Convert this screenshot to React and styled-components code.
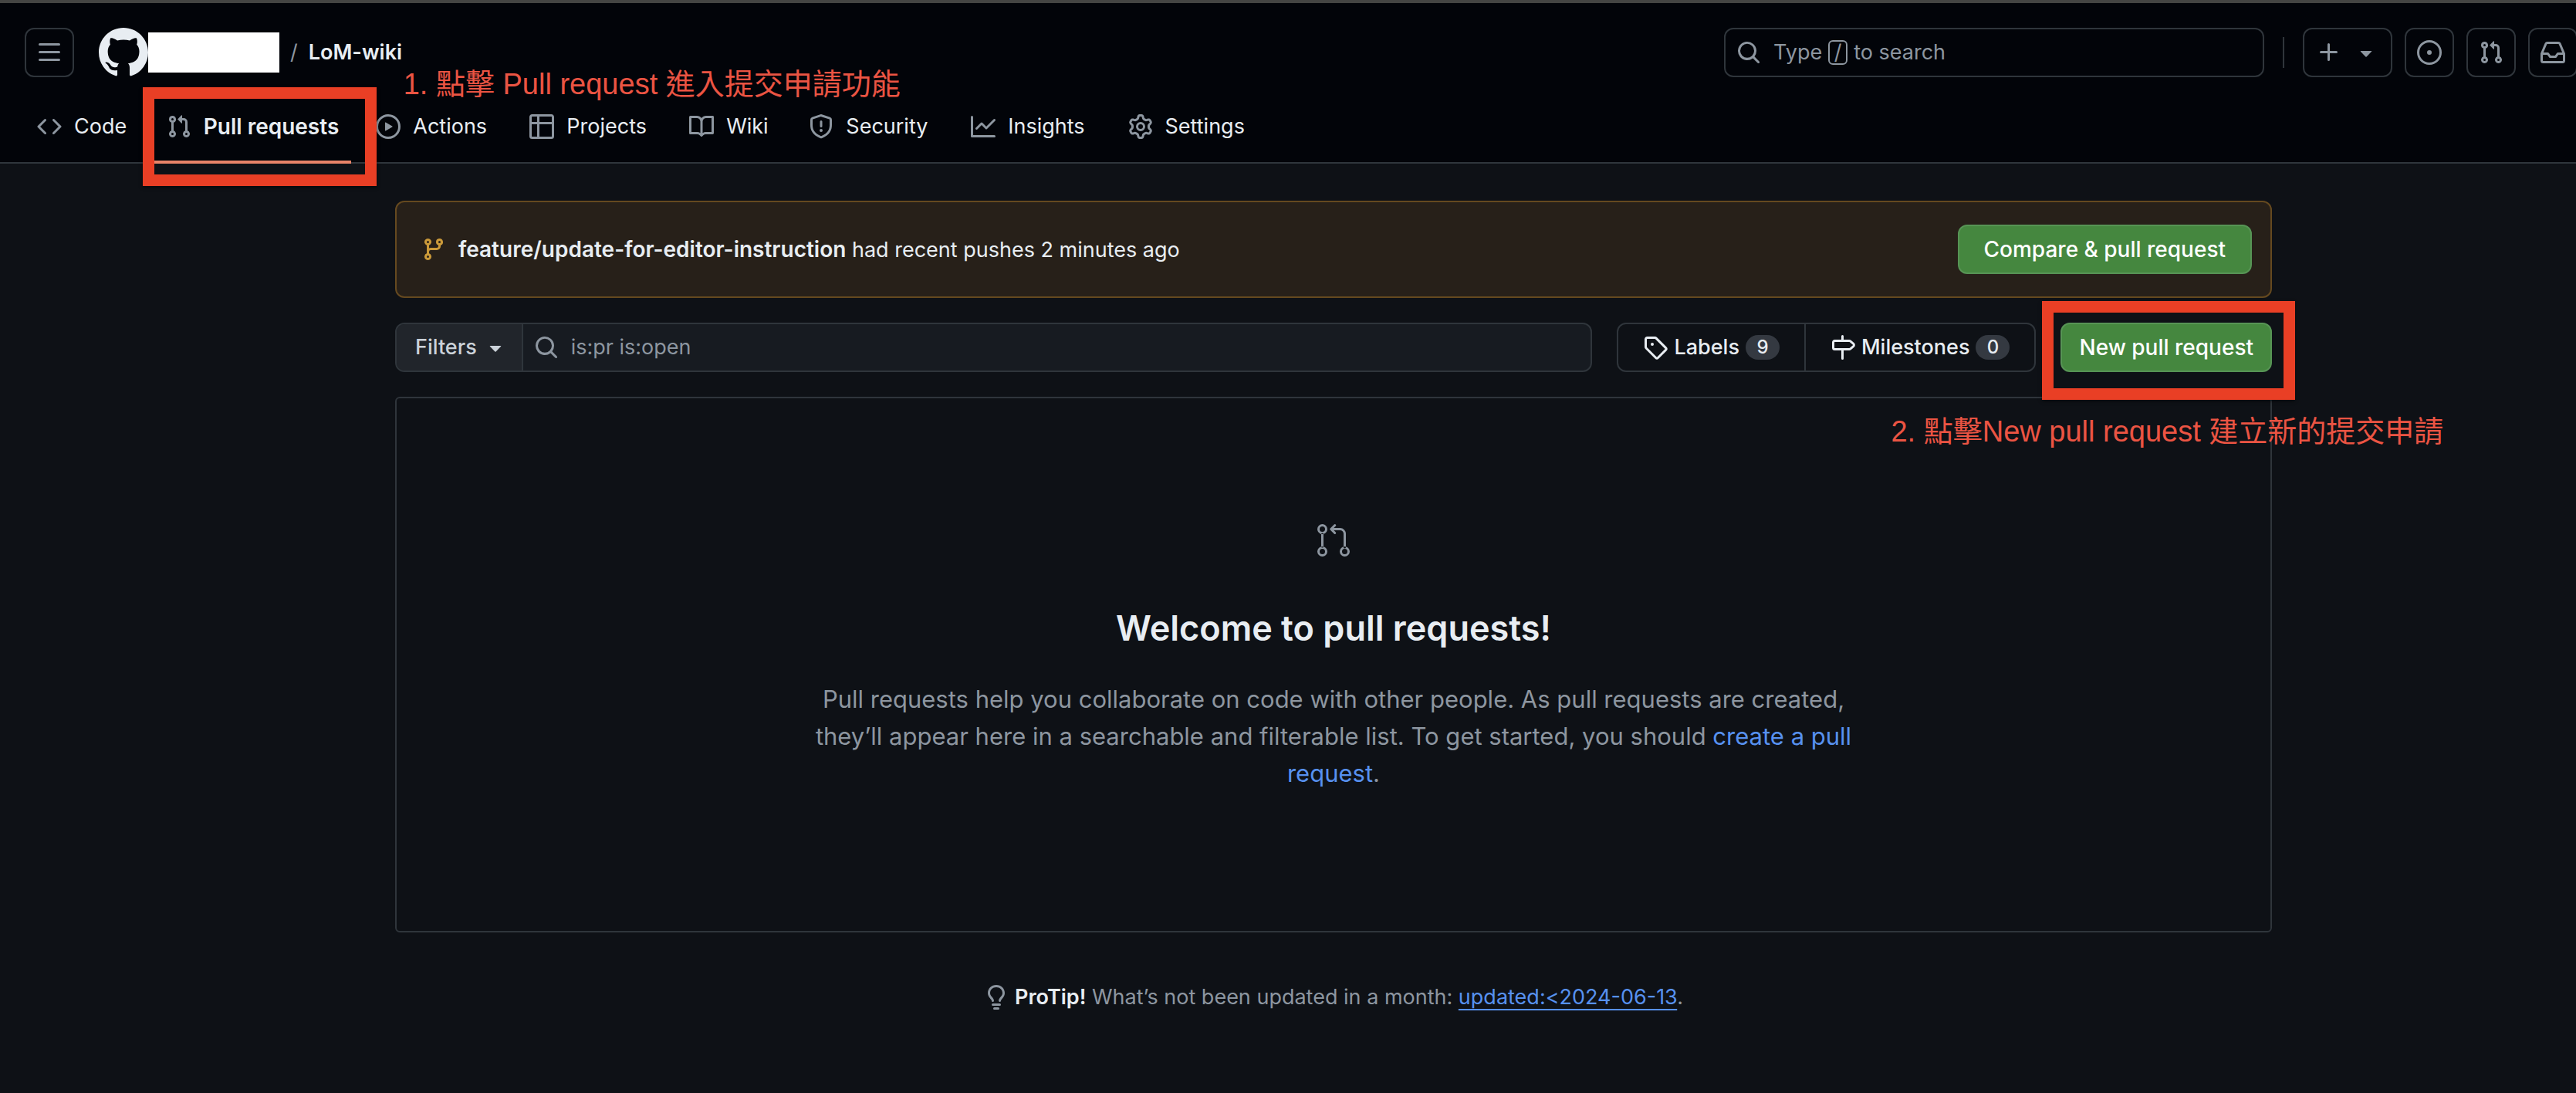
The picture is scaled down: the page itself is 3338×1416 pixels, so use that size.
import React from "react";
import styled, { createGlobalStyle, css } from "styled-components";

const color = {
  canvas: "#0e1116",
  header: "#020409",
  border: "#2f353b",
  text: "#e8edf2",
  muted: "#8d96a0",
  link: "#5791f0",
  green: "#45873f",
  mark: "#e93f25",
  note: "#eb5443",
};

const GlobalStyle = createGlobalStyle`
  *, *::before, *::after { box-sizing: border-box; }
  html { background: ${color.canvas}; }
  body {
    margin: 0;
    color: ${color.text};
    font-family: Inter, "Noto Sans CJK TC", sans-serif;
    font-size: 27px;
    line-height: 40px;
    overflow-x: hidden;
  }
  button, input { font: inherit; color: inherit; }
  a { color: inherit; text-decoration: none; }
`;

const paths = {
  mark: "M8 0c4.42 0 8 3.58 8 8a8.013 8.013 0 0 1-5.45 7.59c-.4.08-.55-.17-.55-.38 0-.27.01-1.13.01-2.2 0-.75-.25-1.23-.54-1.48 1.78-.2 3.65-.88 3.65-3.95 0-.88-.31-1.59-.82-2.15.08-.2.36-1.02-.08-2.12 0 0-.67-.22-2.2.82-.64-.18-1.32-.27-2-.27-.68 0-1.36.09-2 .27-1.53-1.03-2.2-.82-2.2-.82-.44 1.1-.16 1.92-.08 2.12-.51.56-.82 1.28-.82 2.15 0 3.06 1.86 3.75 3.64 3.95-.23.2-.44.55-.51 1.07-.46.21-1.61.55-2.33-.66-.15-.24-.6-.83-1.23-.82-.67.01-.27.38.01.53.34.19.73.9.82 1.13.16.45.68 1.31 2.69.94 0 .67.01 1.3.01 1.49 0 .21-.15.45-.55.38A7.995 7.995 0 0 1 0 8c0-4.42 3.58-8 8-8Z",
  code: "m11.28 3.22 4.25 4.25a.75.75 0 0 1 0 1.06l-4.25 4.25a.749.749 0 0 1-1.275-.326.749.749 0 0 1 .215-.734L13.94 8l-3.72-3.72a.749.749 0 0 1 .326-1.275.749.749 0 0 1 .734.215Zm-6.56 0a.751.751 0 0 1 1.042.018.751.751 0 0 1 .018 1.042L2.06 8l3.72 3.72a.749.749 0 0 1-.326 1.275.749.749 0 0 1-.734-.215L.47 8.53a.75.75 0 0 1 0-1.06Z",
  pull: "M1.5 3.25a2.25 2.25 0 1 1 3 2.122v5.256a2.251 2.251 0 1 1-1.5 0V5.372A2.25 2.25 0 0 1 1.5 3.25Zm5.677-.177L9.573.677A.25.25 0 0 1 10 .854V2.5h1A2.5 2.5 0 0 1 13.5 5v5.628a2.251 2.251 0 1 1-1.5 0V5a1 1 0 0 0-1-1h-1v1.646a.25.25 0 0 1-.427.177L7.177 3.427a.25.25 0 0 1 0-.354ZM3.75 2.5a.75.75 0 1 0 0 1.5.75.75 0 0 0 0-1.5Zm0 9.5a.75.75 0 1 0 0 1.5.75.75 0 0 0 0-1.5Zm8.25.75a.75.75 0 1 0 1.5 0 .75.75 0 0 0-1.5 0Z",
  play: "M8 0a8 8 0 1 1 0 16A8 8 0 0 1 8 0ZM1.5 8a6.5 6.5 0 1 0 13 0 6.5 6.5 0 0 0-13 0Zm4.879-2.773 4.264 2.559a.25.25 0 0 1 0 .428l-4.264 2.559A.25.25 0 0 1 6 10.559V5.442a.25.25 0 0 1 .379-.215Z",
  table: "M0 1.75C0 .784.784 0 1.75 0h12.5C15.216 0 16 .784 16 1.75v12.5A1.75 1.75 0 0 1 14.25 16H1.75A1.75 1.75 0 0 1 0 14.25ZM6.5 6.5v8h7.75a.25.25 0 0 0 .25-.25V6.5Zm8-1.5V1.75a.25.25 0 0 0-.25-.25H6.5V5Zm-13 1.5v7.75c0 .138.112.25.25.25H5v-8ZM5 5V1.5H1.75a.25.25 0 0 0-.25.25V5Z",
  book: "M0 1.75A.75.75 0 0 1 .75 1h4.253c1.227 0 2.317.59 3 1.501A3.743 3.743 0 0 1 11.006 1h4.245a.75.75 0 0 1 .75.75v10.5a.75.75 0 0 1-.75.75h-4.507a2.25 2.25 0 0 0-1.591.659l-.622.621a.75.75 0 0 1-1.06 0l-.622-.621A2.25 2.25 0 0 0 5.258 13H.75a.75.75 0 0 1-.75-.75Zm7.251 10.324.004-5.073-.002-2.253A2.25 2.25 0 0 0 5.003 2.5H1.5v9h3.757a3.75 3.75 0 0 1 1.994.574ZM8.755 4.75l-.004 7.322a3.752 3.752 0 0 1 1.992-.572H14.5v-9h-3.495a2.25 2.25 0 0 0-2.25 2.25Z",
  shield: "M7.467.133a1.748 1.748 0 0 1 1.066 0l5.25 1.68A1.75 1.75 0 0 1 15 3.48V7c0 1.566-.32 3.182-1.303 4.682-.983 1.498-2.585 2.813-5.032 3.855a1.697 1.697 0 0 1-1.33 0c-2.447-1.042-4.049-2.357-5.032-3.855C1.32 10.182 1 8.566 1 7V3.48a1.75 1.75 0 0 1 1.217-1.667Zm.61 1.429a.25.25 0 0 0-.153 0l-5.25 1.68a.25.25 0 0 0-.174.238V7c0 1.358.275 2.666 1.057 3.86.784 1.194 2.121 2.34 4.366 3.297a.196.196 0 0 0 .154 0c2.245-.956 3.582-2.104 4.366-3.298C13.225 9.666 13.5 8.36 13.5 7V3.48a.251.251 0 0 0-.174-.237l-5.25-1.68ZM8.75 4.75v3a.75.75 0 0 1-1.5 0v-3a.75.75 0 0 1 1.5 0ZM9 10.5a1 1 0 1 1-2 0 1 1 0 0 1 2 0Z",
  graph: "M1.5 1.75V13.5h13.75a.75.75 0 0 1 0 1.5H.75a.75.75 0 0 1-.75-.75V1.75a.75.75 0 0 1 1.5 0Zm14.28 2.53-5.25 5.25a.75.75 0 0 1-1.06 0L7 7.06 4.28 9.78a.751.751 0 0 1-1.042-.018.751.751 0 0 1-.018-1.042l3.25-3.25a.75.75 0 0 1 1.06 0L10 7.94l4.72-4.72a.751.751 0 0 1 1.042.018.751.751 0 0 1 .018 1.042Z",
  gear: "M8 0a8.2 8.2 0 0 1 .701.031C9.444.095 9.99.645 10.16 1.29l.288 1.107c.018.066.079.158.212.224.231.114.454.243.668.386.123.082.233.09.299.071l1.103-.303c.644-.176 1.392.021 1.82.63.27.385.506.792.704 1.218.315.675.111 1.422-.364 1.891l-.814.806c-.049.048-.098.147-.088.294.016.257.016.515 0 .772-.01.147.038.246.088.294l.814.806c.475.469.679 1.216.364 1.891a7.977 7.977 0 0 1-.704 1.217c-.428.61-1.176.807-1.82.63l-1.102-.302c-.067-.019-.177-.011-.3.071a5.909 5.909 0 0 1-.668.386c-.133.066-.194.158-.211.224l-.29 1.106c-.168.646-.715 1.196-1.458 1.26a8.006 8.006 0 0 1-1.402 0c-.743-.064-1.289-.614-1.458-1.26l-.289-1.106c-.018-.066-.079-.158-.212-.224a5.738 5.738 0 0 1-.668-.386c-.123-.082-.233-.09-.299-.071l-1.103.303c-.644.176-1.392-.021-1.82-.63a8.12 8.12 0 0 1-.704-1.218c-.315-.675-.111-1.422.363-1.891l.815-.806c.05-.048.098-.147.088-.294a6.214 6.214 0 0 1 0-.772c.01-.147-.038-.246-.088-.294l-.815-.806C.635 6.045.431 5.298.746 4.623a7.92 7.92 0 0 1 .704-1.217c.428-.61 1.176-.807 1.82-.63l1.102.302c.067.019.177.011.3-.071.214-.143.437-.272.668-.386.133-.066.194-.158.211-.224l.29-1.106C6.009.645 6.556.095 7.299.03 7.53.01 7.764 0 8 0Zm-.571 1.525c-.036.003-.108.036-.137.146l-.289 1.105c-.147.561-.549.967-.998 1.189-.173.086-.34.183-.5.29-.417.278-.97.423-1.529.27l-1.103-.303c-.109-.03-.175.016-.195.045-.22.312-.412.644-.573.99-.014.031-.021.11.059.19l.815.806c.411.406.562.957.53 1.456a4.709 4.709 0 0 0 0 .582c.032.499-.119 1.05-.53 1.456l-.815.806c-.081.08-.073.159-.059.19.162.346.353.677.573.989.02.03.085.076.195.046l1.102-.303c.56-.153 1.113-.008 1.53.27.161.107.328.204.501.29.447.222.85.629.997 1.189l.289 1.105c.029.109.101.143.137.146a6.6 6.6 0 0 0 1.142 0c.036-.003.108-.036.137-.146l.289-1.105c.147-.561.549-.967.998-1.189.173-.086.34-.183.5-.29.417-.278.97-.423 1.529-.27l1.103.303c.109.029.175-.016.195-.045.22-.313.411-.644.573-.99.014-.031.021-.11-.059-.19l-.815-.806c-.411-.406-.562-.957-.53-1.456a4.709 4.709 0 0 0 0-.582c-.032-.499.119-1.05.53-1.456l.815-.806c.081-.08.073-.159.059-.19a6.464 6.464 0 0 0-.573-.989c-.02-.03-.085-.076-.195-.046l-1.102.303c-.56.153-1.113.008-1.53-.27a4.44 4.44 0 0 0-.501-.29c-.447-.222-.85-.629-.997-1.189l-.289-1.105c-.029-.11-.101-.143-.137-.146a6.6 6.6 0 0 0-1.142 0ZM11 8a3 3 0 1 1-6 0 3 3 0 0 1 6 0ZM9.5 8a1.5 1.5 0 1 0-3.001.001A1.5 1.5 0 0 0 9.5 8Z",
  search: "M10.68 11.74a6 6 0 0 1-7.922-8.982 6 6 0 0 1 8.982 7.922l3.04 3.04a.749.749 0 0 1-.326 1.275.749.749 0 0 1-.734-.215ZM11.5 7a4.499 4.499 0 1 0-8.997 0A4.499 4.499 0 0 0 11.5 7Z",
  bars: "M1 2.75A.75.75 0 0 1 1.75 2h12.5a.75.75 0 0 1 0 1.5H1.75A.75.75 0 0 1 1 2.75Zm0 5A.75.75 0 0 1 1.75 7h12.5a.75.75 0 0 1 0 1.5H1.75A.75.75 0 0 1 1 7.75ZM1.75 12h12.5a.75.75 0 0 1 0 1.5H1.75a.75.75 0 0 1 0-1.5Z",
  plus: "M7.75 2a.75.75 0 0 1 .75.75V7h4.25a.75.75 0 0 1 0 1.5H8.5v4.25a.75.75 0 0 1-1.5 0V8.5H2.75a.75.75 0 0 1 0-1.5H7V2.75A.75.75 0 0 1 7.75 2Z",
  caret: "m4.427 7.427 3.396 3.396a.25.25 0 0 0 .354 0l3.396-3.396A.25.25 0 0 0 11.396 7H4.604a.25.25 0 0 0-.177.427Z",
  issue: "M8 9.5a1.5 1.5 0 1 0 0-3 1.5 1.5 0 0 0 0 3ZM8 0a8 8 0 1 1 0 16A8 8 0 0 1 8 0ZM1.5 8a6.5 6.5 0 1 0 13 0 6.5 6.5 0 0 0-13 0Z",
  inbox: "M2.8 2.06A1.75 1.75 0 0 1 4.41 1h7.18c.7 0 1.333.417 1.61 1.06l2.74 6.395c.04.093.06.194.06.295v4.5A1.75 1.75 0 0 1 14.25 15H1.75A1.75 1.75 0 0 1 0 13.25v-4.5c0-.101.02-.202.06-.295Zm1.61.44a.25.25 0 0 0-.23.152L1.887 8H4.75a.75.75 0 0 1 .6.3L6.625 10h2.75l1.275-1.7a.75.75 0 0 1 .6-.3h2.863L11.82 2.652a.25.25 0 0 0-.23-.152Zm10.09 7h-2.875l-1.275 1.7a.75.75 0 0 1-.6.3h-3.5a.75.75 0 0 1-.6-.3L4.375 9.5H1.5v3.75c0 .138.112.25.25.25h12.5a.25.25 0 0 0 .25-.25Z",
  branch: "M9.5 3.25a2.25 2.25 0 1 1 3 2.122V6A2.5 2.5 0 0 1 10 8.5H6a1 1 0 0 0-1 1v1.128a2.251 2.251 0 1 1-1.5 0V5.372a2.25 2.25 0 1 1 1.5 0v1.836A2.493 2.493 0 0 1 6 7h4a1 1 0 0 0 1-1v-.628A2.25 2.25 0 0 1 9.5 3.25Zm-6 0a.75.75 0 1 0 1.5 0 .75.75 0 0 0-1.5 0Zm8.25-.75a.75.75 0 1 0 0 1.5.75.75 0 0 0 0-1.5ZM4.25 12a.75.75 0 1 0 0 1.5.75.75 0 0 0 0-1.5Z",
  tag: "M1 7.775V2.75C1 1.784 1.784 1 2.75 1h5.025c.464 0 .91.184 1.238.513l6.25 6.25a1.75 1.75 0 0 1 0 2.474l-5.026 5.026a1.75 1.75 0 0 1-2.474 0l-6.25-6.25A1.752 1.752 0 0 1 1 7.775Zm1.5 0c0 .066.026.13.073.177l6.25 6.25a.25.25 0 0 0 .354 0l5.025-5.025a.25.25 0 0 0 0-.354l-6.25-6.25a.25.25 0 0 0-.177-.073H2.75a.25.25 0 0 0-.25.25ZM6 5a1 1 0 1 1 0 2 1 1 0 0 1 0-2Z",
  milestone: "M7.75 0a.75.75 0 0 1 .75.75V3h3.634c.414 0 .814.147 1.13.414l2.07 1.75a1.75 1.75 0 0 1 0 2.672l-2.07 1.75a1.75 1.75 0 0 1-1.13.414H8.5v5.25a.75.75 0 0 1-1.5 0V10H2.75A1.75 1.75 0 0 1 1 8.25v-3.5C1 3.784 1.784 3 2.75 3H7V.75A.75.75 0 0 1 7.75 0Zm4.384 8.5a.25.25 0 0 0 .161-.06l2.07-1.75a.248.248 0 0 0 0-.38l-2.07-1.75a.25.25 0 0 0-.161-.06H2.75a.25.25 0 0 0-.25.25v3.5c0 .138.112.25.25.25h9.384Z",
  bulb: "M8 1.5c-2.363 0-4 1.69-4 3.75 0 .984.424 1.625.984 2.304l.214.253c.223.264.47.556.673.848.284.411.537.896.621 1.49a.75.75 0 0 1-1.484.211c-.04-.282-.163-.547-.37-.847a8.456 8.456 0 0 0-.542-.68c-.084-.1-.173-.205-.268-.32C3.201 7.75 2.5 6.766 2.5 5.25 2.5 2.31 4.863 0 8 0s5.5 2.31 5.5 5.25c0 1.516-.701 2.5-1.328 3.259-.095.115-.184.22-.268.319-.207.245-.383.453-.541.681-.208.3-.33.565-.37.847a.751.751 0 0 1-1.485-.212c.084-.593.337-1.078.621-1.489.203-.292.45-.584.673-.848.075-.088.147-.173.213-.253.561-.679.985-1.32.985-2.304 0-2.06-1.637-3.75-4-3.75ZM5.75 12h4.5a.75.75 0 0 1 0 1.5h-4.5a.75.75 0 0 1 0-1.5ZM6 15.25a.75.75 0 0 1 .75-.75h2.5a.75.75 0 0 1 0 1.5h-2.5a.75.75 0 0 1-.75-.75Z",
  pullLarge: "M16 19.25a3.25 3.25 0 1 1 6.5 0 3.25 3.25 0 0 1-6.5 0Zm-14.5 0a3.25 3.25 0 1 1 6.5 0 3.25 3.25 0 0 1-6.5 0Zm0-14.5a3.25 3.25 0 1 1 6.5 0 3.25 3.25 0 0 1-6.5 0ZM4.75 3a1.75 1.75 0 1 0 .001 3.501A1.75 1.75 0 0 0 4.75 3Zm0 14.5a1.75 1.75 0 1 0 .001 3.501A1.75 1.75 0 0 0 4.75 17.5Zm14.5 0a1.75 1.75 0 1 0 .001 3.501 1.75 1.75 0 0 0-.001-3.501ZM13.405 1.72a.75.75 0 0 1 0 1.06L12.185 4h4.065A3.75 3.75 0 0 1 20 7.75v8.75a.75.75 0 0 1-1.5 0V7.75a2.25 2.25 0 0 0-2.25-2.25h-4.064l1.22 1.22a.75.75 0 0 1-1.061 1.06l-2.5-2.5a.75.75 0 0 1 0-1.06l2.5-2.5a.75.75 0 0 1 1.06 0ZM4.75 7.25A.75.75 0 0 1 5.5 8v8A.75.75 0 0 1 4 16V8a.75.75 0 0 1 .75-.75Z",
};

const Svg = styled.svg`
  display: block;
  flex: none;
  width: ${(p) => p.$size}px;
  height: ${(p) => p.$size}px;
  fill: ${(p) => p.$color};
`;

function Icon({ name, size = 32, grid = 16, tint = color.muted }) {
  return (
    <Svg viewBox={`0 0 ${grid} ${grid}`} $size={size} $color={tint} aria-hidden="true">
      <path fillRule="evenodd" d={paths[name]} />
    </Svg>
  );
}

/* Header */

const Header = styled.header`
  display: flex;
  flex-direction: column;
  gap: 16px;
  padding: 32px 0 0 32px;
  background: ${color.header};
  border-top: 4px solid #444543;
  box-shadow: inset 0 -2px ${color.border};
`;

const TopRow = styled.div`
  display: flex;
  align-items: center;
  justify-content: space-between;
`;

const Context = styled.div`
  display: flex;
  align-items: center;
`;

const Tools = styled.div`
  display: flex;
  align-items: center;
  gap: 16px;
  margin-right: -2px;
`;

const HeaderButton = styled.button`
  display: flex;
  align-items: center;
  justify-content: center;
  gap: 16px;
  width: ${(p) => (p.$wide ? 116 : 64)}px;
  height: 64px;
  padding: 0;
  background: none;
  border: 2px solid ${color.border};
  border-radius: 12px;
`;

const HomeLink = styled.a`
  display: block;
  margin-left: 32px;
`;

const OwnerMask = styled.span`
  width: 170px;
  height: 52px;
  background: #fff;
`;

const Slash = styled.span`
  padding: 0 14px;
  color: ${color.muted};
`;

const RepoLink = styled.a`
  font-weight: 600;
`;

const SearchButton = styled.button`
  display: flex;
  align-items: center;
  gap: 16px;
  width: 700px;
  height: 64px;
  padding: 0 14px;
  color: ${color.muted};
  background: none;
  border: 2px solid ${color.border};
  border-radius: 12px;
`;

const SearchLabel = styled.span`
  display: flex;
  align-items: center;
  gap: 8px;
`;

const Key = styled.kbd`
  width: 25px;
  height: 32px;
  border: 2px solid ${color.muted};
  border-radius: 6px;
  font: inherit;
  line-height: 28px;
  text-align: center;
`;

const Divider = styled.span`
  width: 2px;
  height: 40px;
  margin: 0 8px;
  background: ${color.border};
`;

const Nav = styled.nav`
  display: flex;
  gap: 16px;
`;

const NavItem = styled.div`
  position: relative;
`;

const NavLink = styled.a`
  display: flex;
  align-items: center;
  gap: 16px;
  height: 96px;
  padding: 0 16px;
  ${(p) =>
    p.$current &&
    css`
      font-size: 28px;
      font-weight: 600;
      box-shadow: inset 0 -4px #ea8468;
    `}
`;

/* Reserves the width of the bold label so tabs keep their place when selected */
const NavLabel = styled.span`
  display: grid;
  &::after {
    content: attr(data-label);
    height: 0;
    overflow: hidden;
    visibility: hidden;
    font-size: 28px;
    font-weight: 600;
  }
`;

/* Red annotations drawn over the page */

const Frame = styled.span`
  position: absolute;
  z-index: 2;
  top: ${(p) => p.$top}px;
  left: ${(p) => p.$left}px;
  width: ${(p) => p.$width}px;
  height: 128px;
  border: 15px solid ${color.mark};
  box-shadow: 0 2px 4px rgba(0, 0, 0, 0.5);
  pointer-events: none;
`;

const Note = styled.span`
  position: absolute;
  z-index: 3;
  top: ${(p) => p.$top}px;
  left: ${(p) => p.$left}px;
  color: ${color.note};
  font-family: "Liberation Sans", "Noto Sans CJK TC", sans-serif;
  font-size: 38px;
  font-weight: 400;
  line-height: 52px;
  white-space: nowrap;
  pointer-events: none;
`;

/* Main column */

const Main = styled.main`
  display: flex;
  justify-content: center;
  padding: 48px 0 88px 118px;
`;

const Column = styled.div`
  display: flex;
  flex-direction: column;
  gap: 32px;
  width: 100%;
  max-width: 2432px;
`;

const Banner = styled.section`
  display: flex;
  align-items: center;
  gap: 16px;
  min-height: 126px;
  padding: 0 24px 0 32px;
  background: #272019;
  border: 2px solid #65491f;
  border-radius: 12px;
`;

const BannerText = styled.p`
  flex: 1;
  margin: 0;
`;

const Primary = styled.button`
  flex: none;
  height: 64px;
  padding: 0 ${(p) => p.$pad}px;
  color: #fff;
  font-size: 28px;
  font-weight: 500;
  background: ${color.green};
  border: 2px solid #579455;
  border-radius: 12px;
`;

const Toolbar = styled.div`
  display: flex;
  gap: 32px;
`;

const FilterGroup = styled.div`
  display: flex;
  flex: 1;
  height: 64px;
  background: #171b21;
  border: 2px solid ${color.border};
  border-radius: 12px;
  overflow: hidden;
`;

const FilterButton = styled.button`
  display: flex;
  align-items: center;
  gap: 8px;
  padding: 0 18px 0 24px;
  color: #cbd2d9;
  font-weight: 500;
  background: #21252b;
  border: 0;
  border-right: 2px solid ${color.border};
`;

const FilterField = styled.label`
  display: flex;
  flex: 1;
  align-items: center;
  gap: 16px;
  padding-left: 14px;
`;

const FilterInput = styled.input`
  flex: 1;
  padding: 0;
  color: ${color.muted};
  background: none;
  border: 0;
  outline: 0;
`;

const LinkGroup = styled.div`
  display: flex;
  height: 64px;
  border: 2px solid ${color.border};
  border-radius: 12px;
`;

const GroupLink = styled.a`
  display: flex;
  align-items: center;
  gap: 8px;
  padding: 0 32px;
  font-weight: 500;
  & + & {
    border-left: 2px solid ${color.border};
  }
`;

const Counter = styled.span`
  min-width: 44px;
  height: 32px;
  border-radius: 16px;
  background: #343941;
  font-size: 24px;
  line-height: 32px;
  text-align: center;
`;

const NewAction = styled.div`
  position: relative;
`;

const Blankslate = styled.section`
  display: flex;
  flex-direction: column;
  align-items: center;
  padding: 160px 64px 180px;
  border: 2px solid ${color.border};
  border-radius: 6px;
  text-align: center;
`;

const Title = styled.h1`
  margin: 52px 0 30px;
  font-size: 45px;
  font-weight: 600;
  line-height: 76px;
`;

const Lead = styled.p`
  max-width: 1344px;
  margin: 0;
  color: ${color.muted};
  font-size: 31px;
  line-height: 48px;
`;

const TextLink = styled.a`
  color: ${color.link};
  ${(p) =>
    p.$underlined &&
    css`
      text-decoration: underline;
      text-decoration-thickness: 2px;
      text-underline-offset: 6px;
    `}
`;

const Tip = styled.p`
  display: flex;
  align-items: center;
  justify-content: center;
  gap: 8px;
  margin: 32px 0 0;
  color: ${color.muted};
`;

const Strong = styled.strong`
  color: ${color.text};
  font-weight: 600;
`;

const BranchName = styled(Strong)`
  font-size: 28px;
`;

const navItems = [
  ["code", "Code"],
  ["pull", "Pull requests"],
  ["play", "Actions"],
  ["table", "Projects"],
  ["book", "Wiki"],
  ["shield", "Security"],
  ["graph", "Insights"],
  ["gear", "Settings"],
];

export default function App() {
  return (
    <>
      <GlobalStyle />
      <Header>
        <TopRow>
          <Context>
            <HeaderButton aria-label="Open menu">
              <Icon name="bars" />
            </HeaderButton>
            <HomeLink href="#" aria-label="Homepage">
              <Icon name="mark" size={64} tint={color.text} />
            </HomeLink>
            <OwnerMask />
            <Slash>/</Slash>
            <RepoLink href="#">LoM-wiki</RepoLink>
          </Context>
          <Tools>
            <SearchButton>
              <Icon name="search" />
              <SearchLabel>
                Type <Key>/</Key> to search
              </SearchLabel>
            </SearchButton>
            <Divider />
            <HeaderButton $wide aria-label="Create new">
              <Icon name="plus" />
              <Icon name="caret" />
            </HeaderButton>
            <HeaderButton aria-label="Issues">
              <Icon name="issue" />
            </HeaderButton>
            <HeaderButton aria-label="Pull requests">
              <Icon name="pull" />
            </HeaderButton>
            <HeaderButton aria-label="Notifications">
              <Icon name="inbox" />
            </HeaderButton>
          </Tools>
        </TopRow>
        <Nav aria-label="Repository">
          {navItems.map(([icon, label]) => {
            const current = icon === "pull";
            return (
              <NavItem key={label}>
                <NavLink href="#" $current={current} aria-current={current ? "page" : undefined}>
                  <Icon name={icon} />
                  <NavLabel data-label={label}>{label}</NavLabel>
                </NavLink>
                {current && (
                  <>
                    <Frame $top={-3} $left={-15} $width={303} />
                    <Note $top={-33} $left={323}>
                      1. 點擊 Pull request 進入提交申請功能
                    </Note>
                  </>
                )}
              </NavItem>
            );
          })}
        </Nav>
      </Header>
      <Main>
        <Column>
          <Banner>
            <Icon name="branch" tint="#cb9a3a" />
            <BannerText>
              <BranchName>feature/update-for-editor-instruction</BranchName> had recent pushes 2 minutes ago
            </BannerText>
            <Primary $pad={32}>Compare &amp; pull request</Primary>
          </Banner>
          <Toolbar>
            <FilterGroup>
              <FilterButton>
                Filters
                <Icon name="caret" tint="#cbd2d9" />
              </FilterButton>
              <FilterField>
                <Icon name="search" />
                <FilterInput aria-label="Search all issues" defaultValue="is:pr is:open" />
              </FilterField>
            </FilterGroup>
            <LinkGroup>
              <GroupLink href="#">
                <Icon name="tag" tint={color.text} />
                Labels
                <Counter>9</Counter>
              </GroupLink>
              <GroupLink href="#">
                <Icon name="milestone" tint={color.text} />
                Milestones
                <Counter>0</Counter>
              </GroupLink>
            </LinkGroup>
            <NewAction>
              <Primary $pad={22}>New pull request</Primary>
              <Frame $top={-28} $left={-24} $width={328} />
              <Note $top={115} $left={-220}>
                2. 點擊New pull request 建立新的提交申請
              </Note>
            </NewAction>
          </Toolbar>
          <Blankslate>
            <Icon name="pullLarge" size={48} grid={24} />
            <Title>Welcome to pull requests!</Title>
            <Lead>
              Pull requests help you collaborate on code with other people. As pull requests are created, they’ll
              appear here in a searchable and filterable list. To get started, you should{" "}
              <TextLink href="#">create a pull request</TextLink>.
            </Lead>
          </Blankslate>
          <Tip>
            <Icon name="bulb" />
            <span>
              <Strong>ProTip!</Strong> What’s not been updated in a month:{" "}
              <TextLink href="#" $underlined>
                updated:&lt;2024-06-13
              </TextLink>
              .
            </span>
          </Tip>
        </Column>
      </Main>
    </>
  );
}
